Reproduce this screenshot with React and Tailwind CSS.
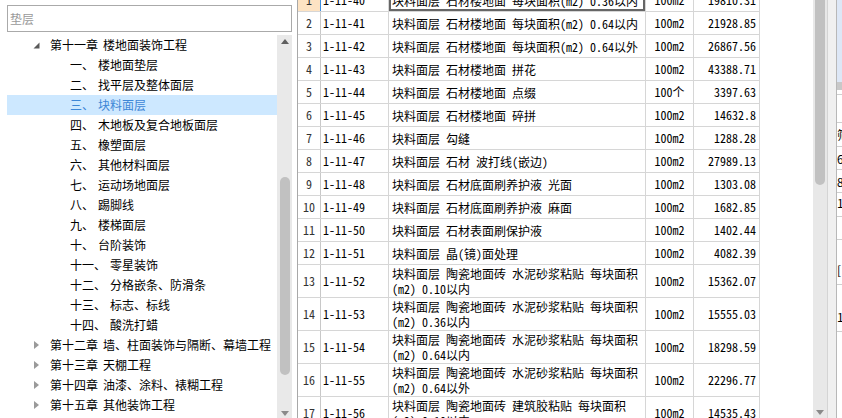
import React from "react";

const treeRows = [
  { type: "ch", open: true, a: "第十一章", b: "楼地面装饰工程" },
  { type: "it", a: "一、", b: "楼地面垫层" },
  { type: "it", a: "二、", b: "找平层及整体面层" },
  { type: "it", a: "三、", b: "块料面层", sel: true },
  { type: "it", a: "四、", b: "木地板及复合地板面层" },
  { type: "it", a: "五、", b: "橡塑面层" },
  { type: "it", a: "六、", b: "其他材料面层" },
  { type: "it", a: "七、", b: "运动场地面层" },
  { type: "it", a: "八、", b: "踢脚线" },
  { type: "it", a: "九、", b: "楼梯面层" },
  { type: "it", a: "十、", b: "台阶装饰" },
  { type: "it", a: "十一、", b: "零星装饰" },
  { type: "it", a: "十二、", b: "分格嵌条、防滑条" },
  { type: "it", a: "十三、", b: "标志、标线" },
  { type: "it", a: "十四、", b: "酸洗打蜡" },
  { type: "ch", open: false, a: "第十二章", b: "墙、柱面装饰与隔断、幕墙工程" },
  { type: "ch", open: false, a: "第十三章", b: "天棚工程" },
  { type: "ch", open: false, a: "第十四章", b: "油漆、涂料、裱糊工程" },
  { type: "ch", open: false, a: "第十五章", b: "其他装饰工程" },
];

const rows = [
  ["1", "1-11-40", ["块料面层 石材楼地面 每块面积(m2) 0.36以内"], "100m2", "19810.31"],
  ["2", "1-11-41", ["块料面层 石材楼地面 每块面积(m2) 0.64以内"], "100m2", "21928.85"],
  ["3", "1-11-42", ["块料面层 石材楼地面 每块面积(m2) 0.64以外"], "100m2", "26867.56"],
  ["4", "1-11-43", ["块料面层 石材楼地面 拼花"], "100m2", "43388.71"],
  ["5", "1-11-44", ["块料面层 石材楼地面 点缀"], "100个", "3397.63"],
  ["6", "1-11-45", ["块料面层 石材楼地面 碎拼"], "100m2", "14632.8"],
  ["7", "1-11-46", ["块料面层 勾缝"], "100m2", "1288.28"],
  ["8", "1-11-47", ["块料面层 石材 波打线(嵌边)"], "100m2", "27989.13"],
  ["9", "1-11-48", ["块料面层 石材底面刷养护液 光面"], "100m2", "1303.08"],
  ["10", "1-11-49", ["块料面层 石材底面刷养护液 麻面"], "100m2", "1682.85"],
  ["11", "1-11-50", ["块料面层 石材表面刷保护液"], "100m2", "1402.44"],
  ["12", "1-11-51", ["块料面层 晶(镜)面处理"], "100m2", "4082.39"],
  ["13", "1-11-52", ["块料面层 陶瓷地面砖 水泥砂浆粘贴 每块面积", "(m2) 0.10以内"], "100m2", "15362.07"],
  ["14", "1-11-53", ["块料面层 陶瓷地面砖 水泥砂浆粘贴 每块面积", "(m2) 0.36以内"], "100m2", "15555.03"],
  ["15", "1-11-54", ["块料面层 陶瓷地面砖 水泥砂浆粘贴 每块面积", "(m2) 0.64以内"], "100m2", "18298.59"],
  ["16", "1-11-55", ["块料面层 陶瓷地面砖 水泥砂浆粘贴 每块面积", "(m2) 0.64以外"], "100m2", "22296.77"],
  ["17", "1-11-56", ["块料面层 陶瓷地面砖 建筑胶粘贴 每块面积", "(m2) 0.10以内"], "100m2", "14535.43"],
];

function TreeRow({ r }) {
  if (r.type === "ch") {
    return (
      <div className="flex h-[20px] items-center pl-[26px] text-black">
        <div className="flex h-[8px] w-[7px] items-center justify-center">
          {r.open ? (
            <svg width="7" height="7" viewBox="0 0 7 7">
              <polygon points="6.5,0.5 6.5,6.5 0.5,6.5" fill="#5a5a5a" />
            </svg>
          ) : (
            <svg width="5" height="8" viewBox="0 0 5 8">
              <polygon points="0,0 5,4 0,8" fill="#9a9a9a" />
            </svg>
          )}
        </div>
        <span className="ml-[10px]">{r.a}</span>
        <span className="ml-[5px]">{r.b}</span>
      </div>
    );
  }
  return (
    <div
      className={
        "flex h-[20px] items-center pl-[63px] " +
        (r.sel ? "bg-[#cde8ff] text-[#3d86d6]" : "text-black")
      }
    >
      <span>{r.a}</span>
      <span className="ml-[4px]">{r.b}</span>
    </div>
  );
}

function Row({ r, first }) {
  const tall = r[2].length > 1;
  return (
    <div
      className={
        "flex w-[462px] shrink-0 border-b border-[#d6d6d6] " +
        (tall ? "h-[33px]" : "h-[23px]")
      }
    >
      <div
        className={
          "flex w-[23px] shrink-0 items-center justify-center border-r text-[#333] " +
          (first ? "border-[#3d8ee0] bg-[#fde3c3]" : "border-[#c8c8c8]")
        }
      >
        {r[0]}
      </div>
      <div className="flex w-[68px] shrink-0 items-center border-r border-[#d6d6d6] pl-[2px]">
        {r[1]}
      </div>
      <div
        className={
          "flex w-[257px] shrink-0 flex-col justify-center border-r border-[#d6d6d6] pl-[3px] leading-[15px] " +
          (first ? "shadow-[inset_0_0_0_2px_#666666]" : "")
        }
      >
        {r[2].map((t, i) => (
          <div key={i} className="whitespace-pre">
            {t}
          </div>
        ))}
      </div>
      <div className="flex w-[48px] shrink-0 items-center justify-center border-r border-[#d6d6d6]">
        {r[3]}
      </div>
      <div className="flex w-[66px] shrink-0 items-center justify-end border-r border-[#d6d6d6] pr-[3px]">
        {r[4]}
      </div>
    </div>
  );
}

export default function App() {
  return (
    <div
      className="flex h-[418px] w-[842px] overflow-hidden bg-white text-[12px]"
      style={{ fontFamily: '"Noto Sans CJK SC", sans-serif' }}
    >
      {/* left tree panel */}
      <div className="flex w-[297px] shrink-0 flex-col">
        <div className="ml-[7px] mt-[5px] flex h-[27px] w-[285px] items-center border border-[#aaaaaa] pl-[2px] text-[12px] text-[#9a9a9a]">
          垫层
        </div>
        <div className="mt-[3px] flex flex-1 pl-[7px] pr-[5px]">
          <div className="flex w-[270px] flex-col">
            {treeRows.map((r, i) => (
              <TreeRow key={i} r={r} />
            ))}
          </div>
          <div className="flex w-[15px] flex-col items-center bg-[#e9e9e9]">
            <svg className="mt-[4px]" width="8" height="5" viewBox="0 0 8 5">
              <polygon points="0,5 4,0 8,5" fill="#5f5f5f" />
            </svg>
            <div className="mt-[133px] h-[198px] w-[10px] rounded-full bg-[#c1c1c1]" />
            <svg className="mt-[36px]" width="8" height="5" viewBox="0 0 8 5">
              <polygon points="0,0 8,0 4,5" fill="#8a8a8a" />
            </svg>
          </div>
        </div>
      </div>

      {/* table */}
      <div
        className="flex w-[516px] shrink-0 flex-col overflow-hidden border-l border-[#a8a8a8] text-black"
        style={{ fontFamily: '"Noto Sans Mono CJK SC", "Noto Sans CJK SC", monospace' }}
      >
        <div className="-mt-[11px] flex flex-col">
          {rows.map((r, i) => (
            <Row key={i} r={r} first={i === 0} />
          ))}
        </div>
      </div>

      {/* table scrollbar */}
      <div className="flex w-[14px] shrink-0 flex-col items-center bg-[#e8e8e8]">
        <div className="h-[185px] w-[10px] rounded-b-full bg-[#c1c1c1]" />
        <div className="flex-1" />
        <svg className="mb-[3px]" width="8" height="5" viewBox="0 0 8 5">
          <polygon points="0,0 8,0 4,5" fill="#8a8a8a" />
        </svg>
      </div>

      {/* far right clipped panel */}
      <div className="flex w-[15px] shrink-0 border-l border-[#d4d4d4]">
        <div className="w-[8px] shrink-0 bg-[#f0f0f0]" />
        <div className="flex w-[6px] shrink-0 flex-col overflow-hidden border-l border-[#b8b8b8] text-[12px]">
          <div className="h-[82px] shrink-0 bg-[#dde7f6]" />
          <div className="h-[8px] shrink-0 bg-[#c8c8c8]" />
          <div className="h-[5px] shrink-0 border-b border-[#cfcfcf]" />
          <div className="h-[28px] shrink-0 border-b border-[#cfcfcf]" />
          <div className="h-[24px] shrink-0 border-b border-[#cfcfcf] leading-[24px]">筛</div>
          <div className="h-[23px] shrink-0 border-b border-[#cfcfcf] leading-[23px]">6</div>
          <div className="h-[23px] shrink-0 border-b border-[#cfcfcf] leading-[23px]">8</div>
          <div className="h-[24px] shrink-0 border-b border-[#cfcfcf] leading-[20px]">1</div>
          <div className="h-[23px] shrink-0 border-b border-[#cfcfcf]" />
          <div className="h-[45px] shrink-0 border-b border-[#cfcfcf] pt-[23px] leading-[14px]">[</div>
          <div className="h-[47px] shrink-0 border-b border-[#cfcfcf] pt-[25px] leading-[14px]">1</div>
        </div>
      </div>
    </div>
  );
}
